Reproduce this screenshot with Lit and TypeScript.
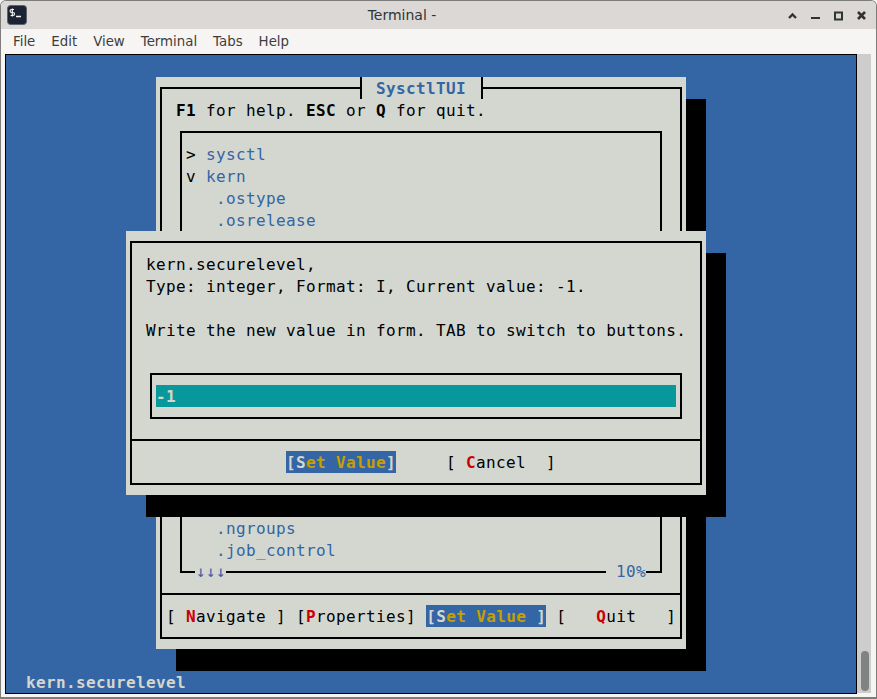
import { LitElement, html, css } from "lit";
import { customElement } from "lit/decorators.js";

@customElement("app-root")
export class AppRoot extends LitElement {
  static styles = css`
    :host { display: block; width: 877px; height: 699px; overflow: hidden; background: #f6f5f3; }
    .window {
      box-sizing: border-box; width: 877px; height: 699px; display: flex; flex-direction: column;
      border: 1px solid #7d7d7b; border-bottom-width: 2px; border-radius: 6px 6px 0 0; overflow: hidden;
      font-family: "DejaVu Sans", sans-serif; color: #3d3d3d;
    }
    .titlebar {
      height: 28px; flex: none; background: #dcd8d5; display: flex; align-items: center; font-size: 14px;
      padding: 0 7px 0 6px; color: #2e3436;
    }
    .app-icon { width: 20px; height: 20px; flex: none; }
    .title { flex: 1; text-align: center; padding-right: 7px; }
    .wm { display: flex; align-items: center; gap: 7px; }
    .wm svg { width: 16px; height: 16px; display: block; }
    .menubar {
      height: 25px; flex: none; display: flex; padding-left: 12px; font-size: 13.33px; align-items: center; background: #f6f5f3;
    }
    .menubar span { margin-right: 16px; }
    .body { flex: 1; display: flex; min-height: 0; padding: 0 4px 4px 4px; background: #f6f5f3; }
    .term {
      position: relative; flex: none; width: 850px; height: 638px; border: 1px solid #000; background: #3465a4; overflow: hidden;
      font: 16px/24px "DejaVu Sans Mono", monospace; letter-spacing: 0.37px; color: #000;
    }
    .scroll { flex: none; width: 14px; background: #cdcdcd; position: relative; }
    .thumb { position: absolute; left: 4px; top: 597px; width: 8px; height: 40px; border-radius: 4px; background: #7f8382; }

    .panel { position: absolute; background: #d3d7cf; box-sizing: border-box; }
    .shadow { position: absolute; background: #000; }
    .frame { box-sizing: border-box; border: 2px solid #000; height: 100%; position: relative; }
    .row { height: 22px; white-space: pre; }
    .blue { color: #3465a4; }
    b { font-weight: 700; }
    .red { color: #cc0000; font-weight: 700; }

    .main-shadow { left: 170px; top: 44px; width: 530px; height: 572px; }
    .main { left: 150px; top: 22px; width: 530px; height: 572px; padding: 10px 4px; }
    .main-title {
      position: absolute; left: 198px; top: -12px; height: 22px; padding: 0 15px 0 14px; background: #d3d7cf;
      border: solid #000; border-width: 0 2px; font-weight: 700; color: #3465a4;
    }
    .help { margin: 10px 0 0 14px; }
    .list { position: relative; box-sizing: border-box; border: 2px solid #000; margin: 10px 18px 0 18px; height: 442px; padding: 10px 0 0 4px; }
    .ind { padding-left: 30px; }
    .hidden-rows { height: 286px; }
    .mark { position: absolute; top: 427px; height: 22px; background: #d3d7cf; color: #3465a4; }
    .arrows { left: 13px; padding-left: 1px; }
    .percent { right: 14px; padding-left: 10px; }
    .sep { height: 2px; background: #000; }
    .main .sep { margin-top: 20px; }
    .buttons { display: flex; margin-top: 10px; }
    .main .buttons { padding-left: 4px; gap: 10px; }
    .focus { background: #3465a4; color: #c4a000; font-weight: 700; }
    .focus i { font-style: normal; color: #d3d7cf; }

    .dlg-shadow { left: 140px; top: 198px; width: 580px; height: 264px; }
    .dlg { left: 120px; top: 176px; width: 580px; height: 264px; padding: 10px 4px; }
    .dlg-text { padding: 10px 0 0 14px; }
    .form-gap { height: 32px; }
    .form { box-sizing: border-box; border: 2px solid #000; margin: 0 18px 0 18px; height: 46px; padding: 10px 4px; }
    .field { height: 22px; background: #06989a; color: #d3d7cf; font-weight: 700; }
    .dlg .sep { margin-top: 20px; }
    .dlg .buttons { padding-left: 154px; gap: 50px; }

    .status { position: absolute; left: 20px; top: 616px; height: 22px; color: #d3d7cf; font-weight: 700; }
  `;

  render() {
    return html`
      <div class="window">
        <div class="titlebar">
          <svg class="app-icon" viewBox="0 0 20 20">
            <rect x="0.5" y="0.5" width="19" height="19" rx="3" fill="#1c2433" stroke="#5c6470"/>
            <path d="M7 4.5H4.6a1 1 0 0 0 0 3h1.4a1 1 0 0 1 0 3H3.6M5.3 3.5v8" fill="none" stroke="#f4f4f4" stroke-width="1.2"/>
            <path d="M9 11.5h5" stroke="#f4f4f4" stroke-width="1.4"/>
          </svg>
          <div class="title">Terminal -</div>
          <div class="wm">
            <svg viewBox="0 0 16 16"><path d="M5 11 8.5 7.5 12 11" fill="none" stroke="#2e3436" stroke-width="2.4"/></svg>
            <svg viewBox="0 0 16 16"><path d="M4 11h9" stroke="#2e3436" stroke-width="2"/></svg>
            <svg viewBox="0 0 16 16"><rect x="5" y="5.5" width="7" height="7" fill="none" stroke="#2e3436" stroke-width="2"/></svg>
            <svg viewBox="0 0 16 16"><path d="M5 5l7 7M12 5l-7 7" fill="none" stroke="#2e3436" stroke-width="2.6"/></svg>
          </div>
        </div>
        <div class="menubar">
          <span>File</span><span>Edit</span><span>View</span><span>Terminal</span><span>Tabs</span><span>Help</span>
        </div>
        <div class="body">
          <div class="term">
            <div class="shadow main-shadow"></div>
            <div class="panel main">
              <div class="frame">
                <div class="main-title">SysctlTUI</div>
                <div class="row help"><b>F1</b> for help. <b>ESC</b> or <b>Q</b> for quit.</div>
                <div class="list">
                  <div class="row">&gt; <span class="blue">sysctl</span></div>
                  <div class="row">v <span class="blue">kern</span></div>
                  <div class="row ind blue">.ostype</div>
                  <div class="row ind blue">.osrelease</div>
                  <div class="hidden-rows"></div>
                  <div class="row ind blue">.ngroups</div>
                  <div class="row ind blue">.job_control</div>
                  <div class="mark arrows">↓↓↓</div>
                  <div class="mark percent">10%</div>
                </div>
                <div class="sep"></div>
                <div class="buttons row">
                  <span>[ <span class="red">N</span>avigate ]</span>
                  <span>[<span class="red">P</span>roperties]</span>
                  <span class="focus"><i>[S</i>et Value <i>]</i></span>
                  <span>[   <span class="red">Q</span>uit   ]</span>
                </div>
              </div>
            </div>
            <div class="shadow dlg-shadow"></div>
            <div class="panel dlg">
              <div class="frame">
                <div class="dlg-text">
                  <div class="row">kern.securelevel,</div>
                  <div class="row">Type: integer, Format: I, Current value: -1.</div>
                  <div class="row"></div>
                  <div class="row">Write the new value in form. TAB to switch to buttons.</div>
                  <div class="form-gap"></div>
                </div>
                <div class="form"><div class="field">-1</div></div>
                <div class="sep"></div>
                <div class="buttons row">
                  <span class="focus"><i>[S</i>et Value<i>]</i></span>
                  <span>[ <span class="red">C</span>ancel  ]</span>
                </div>
              </div>
            </div>
            <div class="status">kern.securelevel</div>
          </div>
          <div class="scroll"><div class="thumb"></div></div>
        </div>
      </div>
    `;
  }
}
